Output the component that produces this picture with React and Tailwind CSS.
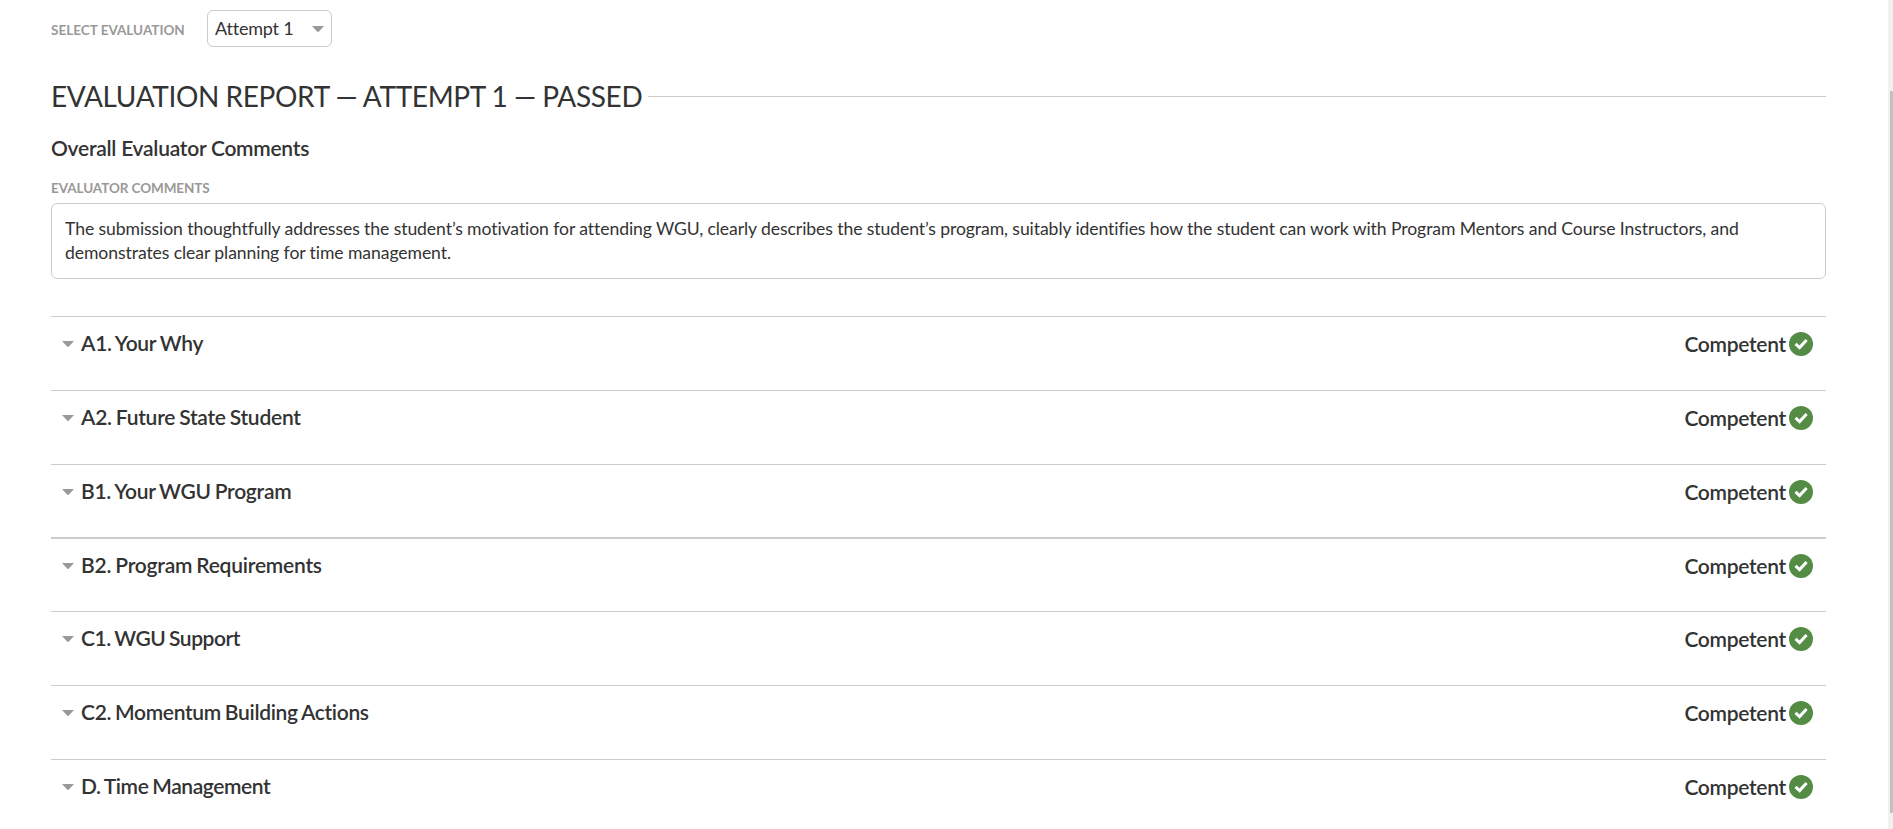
const criteria = [
  { title: 'A1. Your Why', row: 'h-[74px] border-t', tracking: 'tracking-[-0.27px]' },
  { title: 'A2. Future State Student', row: 'h-[74px] border-t', tracking: 'tracking-[-0.25px]' },
  { title: 'B1. Your WGU Program', row: 'h-[73px] border-t', tracking: 'tracking-[-0.26px]' },
  { title: 'B2. Program Requirements', row: 'h-[74px] border-t-2', tracking: 'tracking-[-0.22px]' },
  { title: 'C1. WGU Support', row: 'h-[74px] border-t', tracking: 'tracking-[-0.47px]' },
  { title: 'C2. Momentum Building Actions', row: 'h-[74px] border-t', tracking: 'tracking-[-0.32px]' },
  { title: 'D. Time Management', row: 'h-[70px] border-t', tracking: 'tracking-[-0.42px]' },
];

function Caret() {
  return (
    <svg className="block h-1.5 w-3 shrink-0" viewBox="0 0 12 6" aria-hidden="true">
      <path d="M0 0h12L6.9 5.5a1.2 1.2 0 0 1-1.8 0z" fill="#999" />
    </svg>
  );
}

function CheckBadge() {
  return (
    <svg className="block size-6 shrink-0" viewBox="0 0 24 24" aria-hidden="true">
      <circle cx="12" cy="12" r="12" fill="#548c45" />
      <path d="M6.5 11.8l4.1 3.8 7-7.6" fill="none" stroke="#fff" strokeWidth="3" />
    </svg>
  );
}

function Criterion({ title, row, tracking }) {
  return (
    <section className={'flex justify-between border-[#ccc] pl-[11px] pr-[13px] ' + row}>
      <div className="flex h-[54px] items-center">
        <Caret />
        <h3 className={'ml-[7px] pb-0.5 text-[21px] font-semibold leading-6 [word-spacing:-1px] ' + tracking}>{title}</h3>
      </div>
      <div className="flex h-[54px] items-center">
        <span className="mr-[3px] text-[21px] font-semibold leading-6 tracking-[-0.28px]">Competent</span>
        <CheckBadge />
      </div>
    </section>
  );
}

export default function App() {
  return (
    <div className="flex h-[829px] w-full overflow-hidden bg-white font-['Lato',sans-serif] text-[#333]">
      <main className="flex-1 pl-[51px] pr-[62px]">
        <div className="flex items-center pt-2.5">
          <label className="w-[156px] pt-0.5 text-[13.5px] font-bold leading-4 text-[#999]">SELECT EVALUATION</label>
          <button className="flex h-[37px] w-[125px] items-center justify-between rounded-md border border-[#ccc] pl-[7px] pr-[7px] text-[18px] leading-6">
            <span className="pb-0.5 tracking-[-0.2px]">Attempt 1</span>
            <Caret />
          </button>
        </div>
        <div className="mt-[29px] flex h-10 items-center">
          <h1 className="w-[590px] whitespace-nowrap text-[28px] leading-10 tracking-[-0.34px] [word-spacing:-0.4px]">EVALUATION REPORT — ATTEMPT 1 — PASSED</h1>
          <div className="ml-[7px] h-px flex-1 bg-[#ccc]" />
        </div>
        <h2 className="mt-5 text-[21px] font-semibold leading-6 tracking-[-0.26px]">Overall Evaluator Comments</h2>
        <p className="mt-5 text-[13.5px] font-bold leading-4 tracking-[-0.08px] text-[#999]">EVALUATOR COMMENTS</p>
        <div className="mt-[7px] h-[76px] rounded-md border border-[#ccc] px-[13px] pt-[13px] text-[17.6px] leading-6 tracking-[-0.09px]">
          <p>
            The submission thoughtfully addresses the student’s motivation for attending WGU, clearly describes the student’s program, suitably identifies how the student can work with Program Mentors and Course Instructors, and
            <br />
            demonstrates clear planning for time management.
          </p>
        </div>
        <div className="mt-[37px]">
          {criteria.map((item) => (
            <Criterion key={item.title} {...item} />
          ))}
        </div>
      </main>
      <div className="w-[5px] bg-[#f1f1f1] pl-0.5 pt-[91px]">
        <div className="h-[722px] bg-[#c1c1c1]" />
      </div>
    </div>
  );
}
